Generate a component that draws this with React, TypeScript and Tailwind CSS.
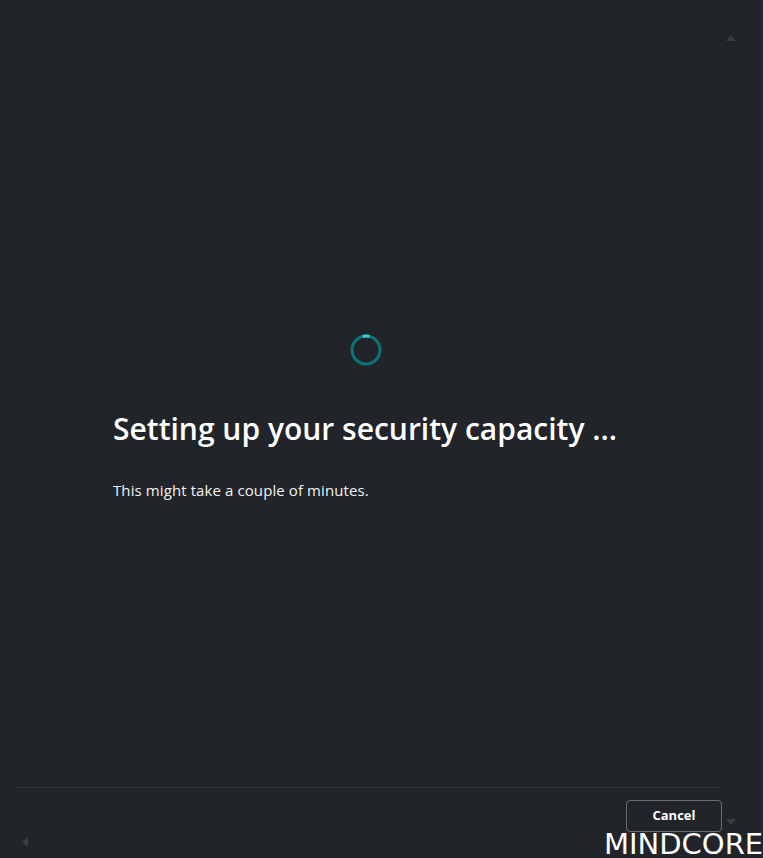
import React from "react";

// Small scrollbar arrow drawn as a CSS triangle
function Arrow({ dir, className = "" }: { dir: "up" | "down" | "left"; className?: string }) {
    const shape =
        dir === "up"
            ? "border-x-[5px] border-x-transparent border-b-[6px] border-b-[#3a3e43]"
            : dir === "down"
            ? "border-x-[5px] border-x-transparent border-t-[6px] border-t-[#3a3e43]"
            : "border-y-[5px] border-y-transparent border-r-[6px] border-r-[#3a3e43]";
    return <div className={`absolute h-0 w-0 ${shape} ${className}`} />;
}

function Spinner() {
    return (
        <svg width="32" height="32" viewBox="0 0 32 32">
            <circle cx="16" cy="16" r="14" fill="none" stroke="#0b7479" strokeWidth="3" />
            <path d="M12.5 2.4 A14 14 0 0 1 19.5 2.4" fill="none" stroke="#4cc9c9" strokeWidth="3" />
        </svg>
    );
}

export default function App() {
    return (
        <div className="relative flex h-[858px] w-[763px] overflow-hidden border-r border-r-[#0c2b4a] bg-[#212428] font-['Segoe_UI','Open_Sans',sans-serif] text-white">
            <div className="flex w-[732px] flex-col">
                <main className="flex h-[787px] flex-col pt-[334px]">
                    <div className="flex justify-center">
                        <Spinner />
                    </div>
                    <div className="pl-[113px]">
                        <h1 className="mt-[43px] text-[30px] font-semibold leading-[40px]">
                            Setting up your security capacity ...
                        </h1>
                        <p className="mt-[31px] text-[15px] leading-[20px] tracking-[0.1px] text-[#f2f2f2]">
                            This might take a couple of minutes.
                        </p>
                    </div>
                </main>
                <footer className="flex flex-col pl-[16px] pr-[10px]">
                    <div className="h-px w-[705px] bg-[#2f3337]" />
                    <div className="mt-[12px] flex justify-end">
                        <button className="h-[32px] w-[96px] rounded-[4px] border border-[#6a6e72] bg-[#212428] text-[13px] font-bold text-white">
                            Cancel
                        </button>
                    </div>
                </footer>
            </div>

            <Arrow dir="up" className="left-[726px] top-[35px]" />
            <Arrow dir="down" className="left-[726px] top-[819px]" />
            <Arrow dir="left" className="left-[22px] top-[837px]" />

            <div className="absolute left-[604px] top-[830px] font-['DejaVu_Sans',sans-serif] text-[29px] leading-none text-white">
                MINDCORE
            </div>
        </div>
    );
}
